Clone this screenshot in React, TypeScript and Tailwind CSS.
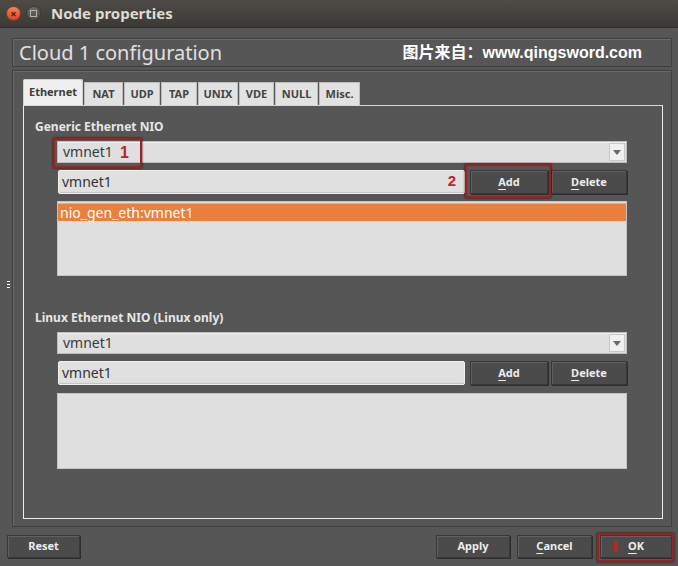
import React from "react";

const ui = { fontFamily: '"Noto Sans", "Open Sans", sans-serif' };

function Mnemonic({ text }: { text: string }) {
  return (
    <span>
      <span className="underline decoration-1 underline-offset-[3px]">{text[0]}</span>
      {text.slice(1)}
    </span>
  );
}

function Btn({ label, w, mnemonic = true }: { label: string; w: string; mnemonic?: boolean }) {
  return (
    <div
      className={`${w} h-full flex items-center justify-center bg-[#4b4b4b] border border-[#383838] shadow-[inset_1px_1px_0_#606060,1px_1px_0_#2e2e2e] text-[11px] font-bold text-[#ececec]`}
    >
      {mnemonic ? <Mnemonic text={label} /> : label}
    </div>
  );
}

function Combo() {
  return (
    <div className="h-[22px] flex items-center bg-[#dfdfdf] border border-[#bdbdbd] shadow-[inset_0_1px_0_#f2f2f2]">
      <span className="pl-[5px] text-[14px] text-[#3a3a3a] flex-1 leading-none">vmnet1</span>
      <div className="w-[16px] h-[18px] mr-[1px] bg-[#f0f0f0] border border-[#c8c8c8] flex items-center justify-center">
        <div className="w-0 h-0 border-l-[4px] border-r-[4px] border-t-[5px] border-l-transparent border-r-transparent border-t-[#6a6a6a]" />
      </div>
    </div>
  );
}

function EditRow({ annotate }: { annotate?: boolean }) {
  return (
    <div className="h-[24px] flex items-stretch">
      <div className="ml-[1px] w-[407px] relative flex items-center bg-[#e0e0e0] rounded-[2px] border border-[#f0f0f0] shadow-[inset_0_-1px_0_#c4c4c4]">
        <span className="pl-[3px] text-[14px] text-[#333] leading-none">vmnet1</span>
        {annotate && (
          <span className="absolute right-[8px] top-[2px] text-[15px] font-bold text-[#c0241e] leading-none" style={{ fontFamily: '"Liberation Sans", sans-serif' }}>
            2
          </span>
        )}
      </div>
      <div className="ml-[5px] relative">
        <Btn label="Add" w="w-[78px]" />
        {annotate && (
          <div className="absolute left-[-5px] top-[-6px] w-[86px] h-[34px] border-2 border-[#9e1f1f] shadow-[0_0_2px_#300]" />
        )}
      </div>
      <div className="ml-[3px]">
        <Btn label="Delete" w="w-[76px]" />
      </div>
    </div>
  );
}

function ListBox({ item, h }: { item?: string; h: string }) {
  return (
    <div className={`${h} bg-[#dfdfdf] border border-[#c4c4c4] pt-[1px]`}>
      {item && (
        <div className="h-[18px] bg-[#e9803e] border-t border-[#f3a678] flex items-center">
          <span className="pl-[2px] text-[14px] text-white leading-none">{item}</span>
        </div>
      )}
    </div>
  );
}

const tabs: { name: string; w: string }[] = [
  { name: "NAT", w: "w-[39px]" },
  { name: "UDP", w: "w-[36px]" },
  { name: "TAP", w: "w-[36px]" },
  { name: "UNIX", w: "w-[40px]" },
  { name: "VDE", w: "w-[35px]" },
  { name: "NULL", w: "w-[43px]" },
  { name: "Misc.", w: "w-[41px]" },
];

export default function App() {
  return (
    <div className="w-[678px] h-[566px] bg-[#565656] overflow-hidden flex flex-col" style={ui}>
      {/* Title bar */}
      <div className="h-[28px] shrink-0 flex items-center bg-gradient-to-b from-[#4e4b47] to-[#3b3a36] border-b border-[#2f2e2b]">
        <div className="ml-[6px] w-[15px] h-[15px] rounded-full bg-gradient-to-b from-[#f3845a] to-[#d5452a] border border-[#8a3a22] flex items-center justify-center text-[11px] leading-none text-[#5a1a0c] font-bold">
          ×
        </div>
        <div className="ml-[5px] w-[15px] h-[15px] rounded-full bg-gradient-to-b from-[#6d6a65] to-[#4c4a46] border border-[#3a3835] flex items-center justify-center">
          <div className="w-[7px] h-[7px] border border-[#b8b4ac]" />
        </div>
        <span className="ml-[10px] text-[15px] font-bold text-[#dfdbd2]">Node properties</span>
      </div>

      {/* Body */}
      <div className="flex pt-[10px] h-[499px] shrink-0">
        <div className="w-[12px] flex items-center justify-center">
          <div className="flex flex-col gap-[2px] ml-[4px] mt-[4px]">
            <div className="w-[3px] h-[1px] bg-white" />
            <div className="w-[3px] h-[1px] bg-white" />
            <div className="w-[3px] h-[1px] bg-white" />
          </div>
        </div>
        <div className="w-[660px] flex flex-col">
          {/* Header */}
          <div className="h-[29px] flex items-center justify-between border border-[#3f3f3f] shadow-[inset_1px_1px_0_#6a6a6a] pl-[6px] pr-[29px]">
            <span className="text-[20px] text-[#e0e0e0] leading-none">Cloud 1 configuration</span>
            <span
              className="text-[16px] font-bold text-white leading-none"
              style={{ fontFamily: '"Liberation Sans", "Noto Sans CJK SC", sans-serif' }}
            >
              图片来自：www.qingsword.com
            </span>
          </div>

          {/* Tab frame */}
          <div className="mt-[3px] h-[457px] border border-[#3f3f3f] shadow-[inset_1px_1px_0_#6a6a6a] pl-[9px] pr-[8px] pt-[8px] flex flex-col">
            {/* Tabs */}
            <div className="h-[26px] flex items-end">
              <div className="ml-[1px] w-[60px] h-[26px] bg-[#efefef] border border-[#cfcfcf] border-b-0 rounded-t-[2px] flex items-center justify-center text-[11px] font-bold text-[#3c3c3c]">
                Ethernet
              </div>
              {tabs.map((t) => (
                <div
                  key={t.name}
                  className={`${t.w} h-[23px] ml-[1px] bg-[#e2e2e2] border border-[#bdbdbd] border-b-0 flex items-center justify-center text-[11px] font-bold text-[#444]`}
                >
                  {t.name}
                </div>
              ))}
            </div>
            {/* Pane */}
            <div className="h-[414px] ml-[1px] border border-[#ececec] border-t-[#d8d8d8] pl-[11px] pr-[35px] pt-[14px] flex flex-col">
              <div className="text-[12px] font-bold text-[#e6e6e6] leading-[14px]">Generic Ethernet NIO</div>
              <div className="pl-[22px] flex flex-col">
                <div className="mt-[7px] relative">
                  <Combo />
                  <div className="absolute left-[-4px] top-[-3px] w-[89px] h-[30px] border-2 border-[#9e1f1f] shadow-[0_0_2px_#300] flex items-center">
                    <span
                      className="ml-[65px] text-[16px] font-bold text-[#c0241e] leading-none"
                      style={{ fontFamily: '"Liberation Sans", sans-serif' }}
                    >
                      1
                    </span>
                  </div>
                </div>
                <div className="mt-[7px]">
                  <EditRow annotate />
                </div>
                <div className="mt-[7px]">
                  <ListBox h="h-[75px]" item="nio_gen_eth:vmnet1" />
                </div>
              </div>

              <div className="mt-[35px] text-[12px] font-bold text-[#e6e6e6] leading-[14px]">
                Linux Ethernet NIO (Linux only)
              </div>
              <div className="pl-[22px] flex flex-col">
                <div className="mt-[7px]">
                  <Combo />
                </div>
                <div className="mt-[7px]">
                  <EditRow />
                </div>
                <div className="mt-[8px]">
                  <ListBox h="h-[76px]" />
                </div>
              </div>
            </div>
          </div>
        </div>
      </div>

      {/* Bottom buttons */}
      <div className="mt-[8px] h-[23px] flex items-stretch">
        <div className="ml-[7px]">
          <Btn label="Reset" w="w-[73px]" mnemonic={false} />
        </div>
        <div className="flex-1" />
        <Btn label="Apply" w="w-[74px]" mnemonic={false} />
        <div className="ml-[7px]">
          <Btn label="Cancel" w="w-[75px]" />
        </div>
        <div className="ml-[8px] mr-[6px] relative">
          <Btn label="OK" w="w-[72px]" />
          <span className="absolute left-[14px] top-[6px] w-[4px] h-[10px] bg-[#c0241e] rounded-[1px]" />
          <div className="absolute left-[-3px] top-[-2px] w-[77px] h-[29px] border-2 border-[#9e1f1f] shadow-[0_0_2px_#300]" />
        </div>
      </div>
    </div>
  );
}
